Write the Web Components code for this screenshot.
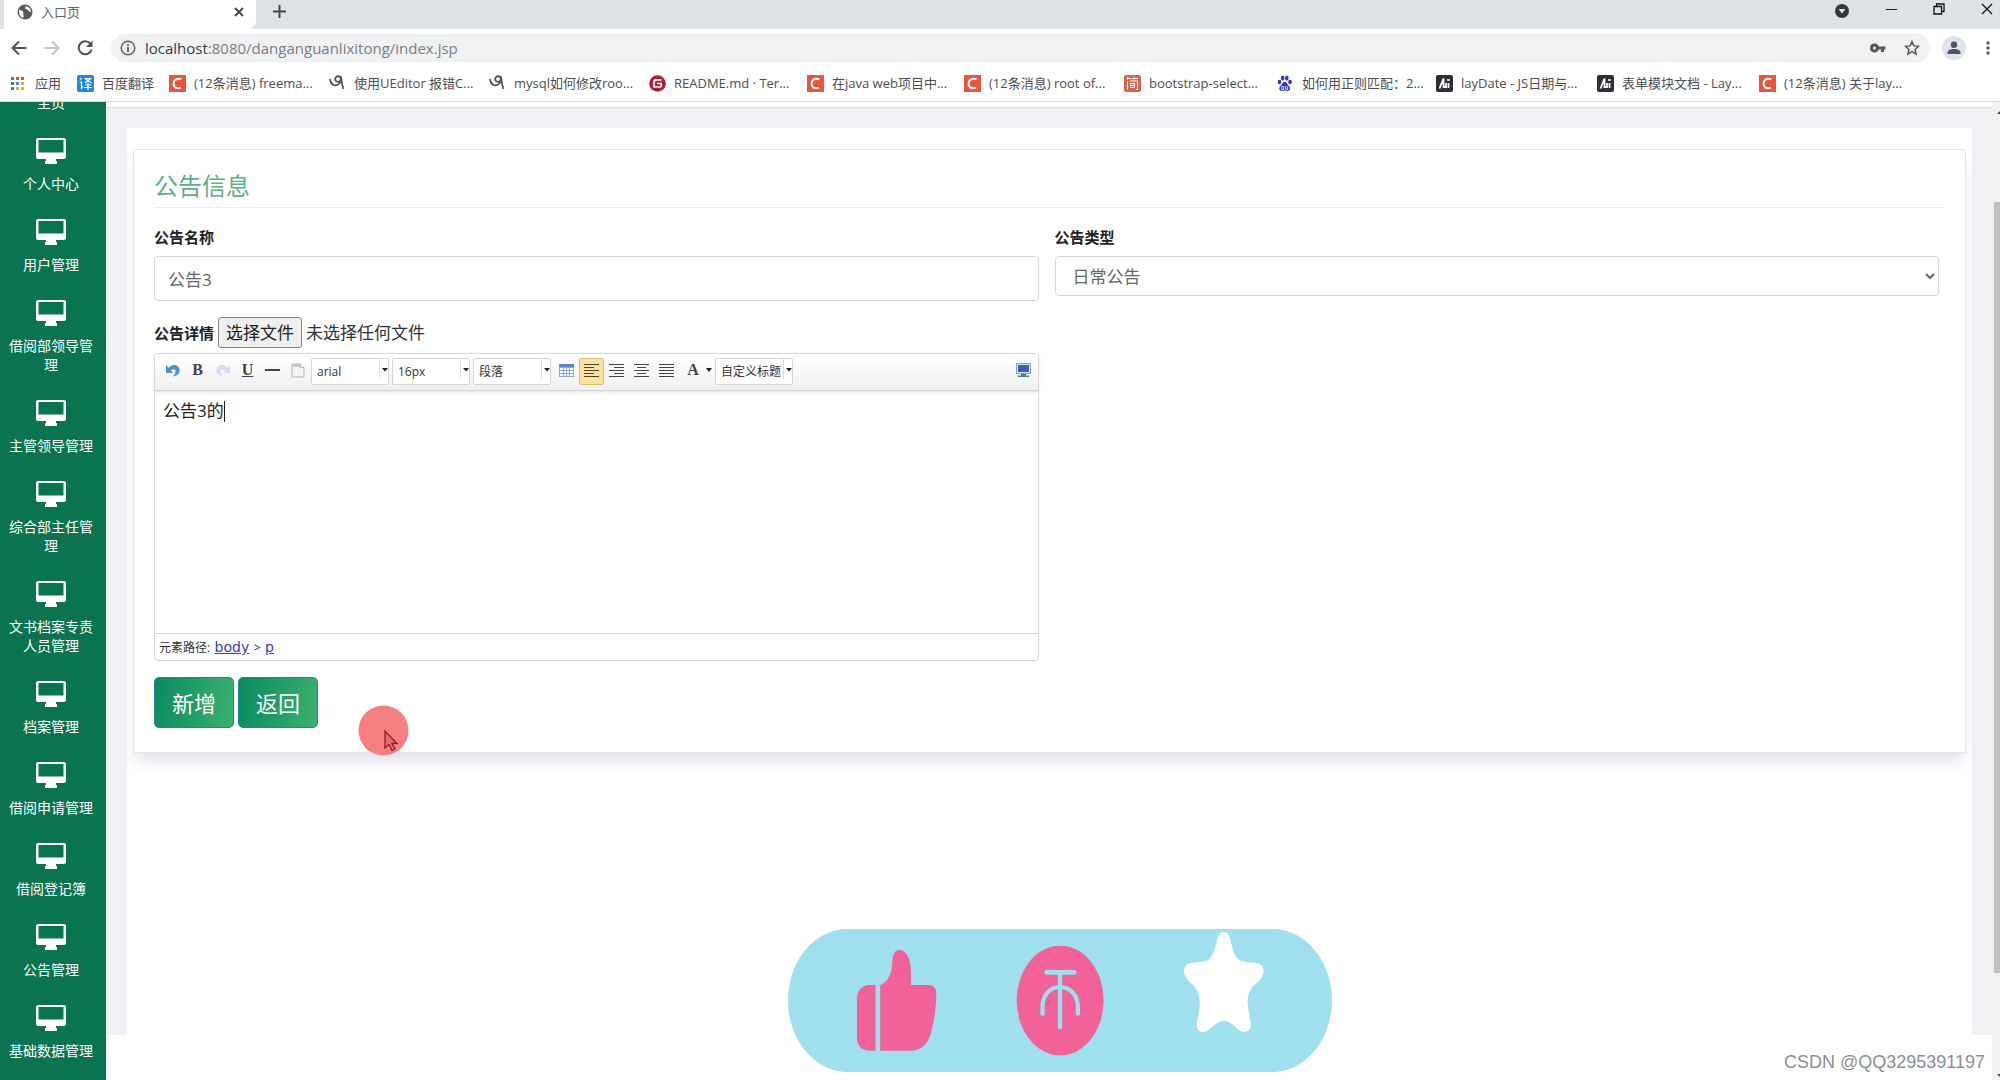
<!DOCTYPE html>
<html lang="zh-CN">
<head>
<meta charset="utf-8">
<title>入口页</title>
<style>
  body { margin: 0; height: 100vh; overflow: hidden; background: #fff; font-family: "Open Sans", "Noto Sans CJK SC", sans-serif; }
</style>
</head>
<body>
<app-window></app-window>

<script>
const define = (name, html, setup) => {
  const tpl = document.createElement('template');
  tpl.innerHTML = html;
  customElements.define(name, class extends HTMLElement {
    constructor() {
      super();
      this.attachShadow({ mode: 'open' }).append(tpl.content.cloneNode(true));
    }
    connectedCallback() { if (setup) setup(this, this.shadowRoot); }
  });
};

/* ---------- browser chrome ---------- */
define('tab-strip', `
<style>
  :host { display: flex; align-items: stretch; height: 29px; background: #dee1e6; padding-left: 4px; }
  .tab { display: flex; align-items: center; width: 252px; box-sizing: border-box; padding: 0 12px 5px 13px; background: #fff; border-radius: 0 0 8px 0; }
  .tab span { flex: 1; margin-left: 8px; font-size: 13px; line-height: 16px; color: #5f6368; }
  button { border: 0; padding: 0; background: none; display: flex; align-items: center; justify-content: center; }
  .plus { width: 46px; padding-bottom: 6px; }
  .win { margin-left: auto; display: flex; padding: 0 7px 11px 0; gap: 36px; align-items: center; }
  .win svg { display: block; }
</style>
<div class="tab">
  <svg width="16" height="16" viewBox="0 0 16 16"><circle cx="8" cy="8" r="7.5" fill="#55585d"/><path d="M2 5.5C3.500 6.500 5 6.200 6 7.500 7 9 5.500 9.500 6.500 11.500 7 13 6 14 6 14 3 13 1.500 10 2 5.500ZM8 2.200C9 3.500 7.500 4 8.500 5 9.500 6 10.500 5 11.500 6.500 12 8 13.500 7.500 14 8.500 14 5 12 2 8 2.200Z" fill="#fff"/></svg>
  <span>入口页</span>
  <button aria-label="关闭标签页"><svg width="10" height="10" viewBox="0 0 10 10" stroke="#45484c" stroke-width="2"><path d="M1 1l8 8M9 1l-8 8"/></svg></button>
</div>
<button class="plus" aria-label="新标签页"><svg width="13" height="13" viewBox="0 0 13 13" stroke="#45484c" stroke-width="2"><path d="M6.500 0v13M0 6.500h13"/></svg></button>
<div class="win">
  <button aria-label="更多"><svg width="16" height="18" viewBox="0 0 16 18"><circle cx="8" cy="11" r="7" fill="#35383c"/><path d="M4.500 9h7L8 13.500Z" fill="#dee1e6"/></svg></button>
  <button aria-label="最小化"><svg width="11" height="11" viewBox="0 0 11 11"><path d="M0 5.500h11" stroke="#222" stroke-width="1"/></svg></button>
  <button aria-label="还原"><svg width="12" height="12" viewBox="0 0 12 12" fill="none" stroke="#111" stroke-width="1.300"><path d="M1 3.500h7.500V11H1ZM3.500 3.500V1H11v7.500H8.500"/></svg></button>
  <button aria-label="关闭"><svg width="12" height="12" viewBox="0 0 12 12" stroke="#111" stroke-width="1.200"><path d="M1 1l10 10M11 1L1 11"/></svg></button>
</div>`);

define('address-bar', `
<style>
  :host { display: flex; align-items: center; height: 38px; padding: 0 10px 0 11px; }
  button { border: 0; padding: 0; background: none; display: flex; }
  .nav { display: flex; gap: 17px; margin-right: 18px; }
  .pill { flex: 1; display: flex; align-items: center; height: 28px; border-radius: 14px; background: #f0f1f3; padding: 0 10px 0 9px; margin-right: 12px; }
  label { display: flex; margin-right: 9px; }
  .url { flex: 1; font-size: 15px; line-height: 20px; color: #7a7e83; white-space: nowrap; }
  .url b { font-weight: 400; color: #3a3d41; }
  .tools { display: flex; gap: 18px; align-items: center; }
  .me { width: 24px; height: 24px; border-radius: 50%; background: #dfe2ea; align-items: center; justify-content: center; margin-right: 20px; }
</style>
<div class="nav">
  <button aria-label="后退"><svg width="16" height="16" viewBox="0 0 16 16" fill="none" stroke="#505459" stroke-width="2"><path d="M15.500 8H2M8 1.500L1.500 8 8 14.500"/></svg></button>
  <button aria-label="前进"><svg width="16" height="16" viewBox="0 0 16 16" fill="none" stroke="#c3c5c8" stroke-width="2"><path d="M.5 8H14M8 1.500L14.500 8 8 14.500"/></svg></button>
  <button aria-label="刷新"><svg width="16" height="16" viewBox="0 0 16 16" fill="none" stroke="#505459" stroke-width="2"><path d="M13.800 4.500A6.500 6.500 0 1 0 14.500 9.500"/><path d="M15.500 .5v6.500H9Z" fill="#505459" stroke="none"/></svg></button>
</div>
<div class="pill">
  <label><svg width="16" height="16" viewBox="0 0 16 16" fill="none" stroke="#5f6368" stroke-width="1.500"><circle cx="8" cy="8" r="6.800"/><path d="M8 7v5M8 4v1.800" stroke-width="1.800"/></svg></label>
  <div class="url" role="textbox" aria-label="地址"><b>localhost</b>:8080/danganguanlixitong/index.jsp</div>
  <div class="tools">
    <button aria-label="密码"><svg width="16" height="16" viewBox="0 0 16 16"><path d="M4.500 3.500a4.500 4.500 0 1 0 4.200 6H11v2.500h3V9.500h1.500v-3H8.700A4.500 4.500 0 0 0 4.500 3.500Zm0 3a1.500 1.500 0 1 1 0 3 1.500 1.500 0 0 1 0-3Z" fill="#55585d"/></svg></button>
    <button aria-label="收藏"><svg width="16" height="16" viewBox="0 0 16 16" fill="none" stroke="#55585d" stroke-width="1.500"><path d="M8 1.500l1.900 4.400 4.700.4-3.600 3.200 1.100 4.700L8 11.700l-4.100 2.500L5 9.500 1.400 6.300l4.700-.4Z"/></svg></button>
  </div>
</div>
<button class="me" aria-label="账户"><svg width="14" height="14" viewBox="0 0 14 14" fill="#4d5366"><circle cx="7" cy="3.800" r="3.200"/><path d="M.5 13V11.500C.5 9 4 8 7 8s6.500 1 6.500 3.500V13Z"/></svg></button>
<button aria-label="菜单"><svg width="4" height="14" viewBox="0 0 4 14" fill="#55585d"><circle cx="2" cy="2" r="1.700"/><circle cx="2" cy="7" r="1.700"/><circle cx="2" cy="12" r="1.700"/></svg></button>`);

const bookmarkIcons = {
  apps: '<g><path fill="#d94b3d" d="M1 2h3v3H1zM6 2h3v3H6zM11 2h3v3h-3z"/><path fill="#3c8f52" d="M1 7h3v3H1z"/><path fill="#4a83e0" d="M6 7h3v3H6z"/><path fill="#e2ae2c" d="M11 7h3v3h-3z"/><path fill="#3c8f52" d="M1 12h3v3H1z"/><path fill="#e2ae2c" d="M6 12h3v3H6zM11 12h3v3h-3z"/></g>',
  fanyi: '<rect width="17" height="17" rx="2" fill="#1e88e5"/><g fill="none" stroke="#fff" stroke-width="1.200"><path d="M3 3l1.500 1.500M2.500 7h2v6l1.500-1.500M7.500 3.500h6L8 8M8.500 4l6 4M8 10h6M7 12.500h8M11 8v7"/></g>',
  csdn: '<rect width="17" height="17" fill="#e9553a"/><path d="M12.500 4.200C8 2.500 4.600 5 4.600 8.800 4.600 12.800 8 14 12 12.900" fill="none" stroke="#fff" stroke-width="2"/>',
  ask: '<g fill="none" stroke="#4a4a4a" stroke-width="1.700"><path d="M1 4c.5 3 1.500 5 3.500 6C7 11 10 9.500 11.500 7"/><circle cx="9" cy="4" r="2.800"/><path d="M12 1.500c.5 5 1 8.500 2.500 12.500"/></g>',
  gitee: '<circle cx="8.500" cy="8.500" r="8.300" fill="#b81b34"/><path d="M12.500 4.800H7.500C5.500 4.800 5 5.500 5 7.500V12h5.500c1.300 0 1.700-.6 1.700-1.700V8.500H8" fill="none" stroke="#fff" stroke-width="1.700"/>',
  jian: '<rect width="17" height="17" rx="2" fill="#d9624f"/><g fill="none" stroke="#fff" stroke-width="1.100"><path d="M4 2L3 4.500M3.500 3.500H8M10 2L9 4.500M9.500 3.500H14M3.500 6v8.500M6 6h7.500v8.500H12M6.500 8.500h4v4h-4zM6.500 10.500h4"/></g>',
  baidu: '<g fill="#2f36d0"><ellipse cx="2.500" cy="7" rx="1.800" ry="2.300"/><ellipse cx="5.700" cy="3" rx="1.800" ry="2.500"/><ellipse cx="9.800" cy="3" rx="1.800" ry="2.500"/><ellipse cx="13" cy="7" rx="1.800" ry="2.300"/><path d="M7.700 7C10 7 10 9.500 12 11c2 2 1 5-1.500 5-1.500 0-1.500-.4-2.800-.4s-1.500.4-3 .4C2.300 16 1.500 13 3.300 11 5.300 9.500 5.300 7 7.700 7Z"/></g><path d="M4.700 11.500h2v3h-2zM8.700 11v3.300h2V11" fill="none" stroke="#fff" stroke-width=".8"/>',
  lay: '<rect width="17" height="17" rx="2" fill="#2c2e38"/><path d="M3.500 13.500L7.500 3.500V12H10V8M12.500 8v5" fill="none" stroke="#fff" stroke-width="1.800"/><path d="M11 5h3" stroke="#fff" stroke-width="1.500"/>'
};
define('book-mark', `
<style>
  :host { display: block; }
  a { display: flex; align-items: center; gap: 8px; font-size: 13px; line-height: 18px; color: #4b4e52; text-decoration: none; white-space: nowrap; }
  svg { display: block; flex: none; }
</style>
<a href="#"><svg width="17" height="17" viewBox="0 0 17 17"></svg><slot></slot></a>`,
(el, root) => { root.querySelector('svg').innerHTML = bookmarkIcons[el.getAttribute('icon')]; });

define('bookmark-bar', `
<style>
  :host { display: grid; grid-template-columns: 67px 92px repeat(3, 160px) 158px 157px 160px 153px 159px 161px 162px auto; align-items: center; height: 32px; padding: 0 0 2px 10px; border-bottom: 1px solid #d9dadc; }
</style>
<book-mark icon="apps">应用</book-mark>
<book-mark icon="fanyi">百度翻译</book-mark>
<book-mark icon="csdn">(12条消息) freema...</book-mark>
<book-mark icon="ask">使用UEditor 报错C...</book-mark>
<book-mark icon="ask">mysql如何修改roo...</book-mark>
<book-mark icon="gitee">README.md · Ter...</book-mark>
<book-mark icon="csdn">在java web项目中...</book-mark>
<book-mark icon="csdn">(12条消息) root of...</book-mark>
<book-mark icon="jian">bootstrap-select...</book-mark>
<book-mark icon="baidu">如何用正则匹配：2...</book-mark>
<book-mark icon="lay">layDate - JS日期与...</book-mark>
<book-mark icon="lay">表单模块文档 - Lay...</book-mark>
<book-mark icon="csdn">(12条消息) 关于lay...</book-mark>`);

/* ---------- side navigation ---------- */
define('nav-item', `
<style>
  :host { display: block; }
  a { display: flex; flex-direction: column; align-items: center; gap: 10px; padding: 26px 8px 0; color: #fff; text-decoration: none; font-size: 14px; line-height: 19px; text-align: center; }
  svg { display: block; }
</style>
<a href="#"><svg width="30" height="26" viewBox="0 0 30 26"><path fill="#fff" fill-rule="evenodd" d="M2 0h26a2 2 0 0 1 2 2v17a2 2 0 0 1-2 2h-8v2h1v3H9v-3h1v-2H2a2 2 0 0 1-2-2V2a2 2 0 0 1 2-2Zm.500 2v12.500h25V2Z"/></svg><slot></slot></a>`);

define('side-nav', `
<style>
  :host { display: block; flex: none; width: 106px; overflow: hidden; background: #0a7350; }
  nav { margin-top: -71px; padding-right: 4px; }
</style>
<nav>
  <nav-item>主页</nav-item>
  <nav-item>个人中心</nav-item>
  <nav-item>用户管理</nav-item>
  <nav-item>借阅部领导管理</nav-item>
  <nav-item>主管领导管理</nav-item>
  <nav-item>综合部主任管理</nav-item>
  <nav-item>文书档案专责人员管理</nav-item>
  <nav-item>档案管理</nav-item>
  <nav-item>借阅申请管理</nav-item>
  <nav-item>借阅登记簿</nav-item>
  <nav-item>公告管理</nav-item>
  <nav-item>基础数据管理</nav-item>
</nav>`);

/* ---------- rich text editor ---------- */
define('tool-combo', `
<style>
  :host { display: flex; width: 78px; height: 27px; box-sizing: border-box; border: 1px solid #d5d5d5; border-radius: 2px; background: #fff; margin: 0 3px 0 0; }
  select { appearance: none; flex: 1; min-width: 0; border: 0; background: none; padding: 0 0 1px 5px; font: 12px "Open Sans", "Noto Sans CJK SC", sans-serif; color: #333; text-overflow: clip; outline: 0; }
  svg { display: block; flex: none; width: 8px; height: 20px; border-left: 1px solid #ddd; }
</style>
<select></select><svg viewBox="0 0 8 20"><path d="M2 9h6L5 12.500Z" fill="#222"/></svg>`,
(el, root) => {
  const s = root.querySelector('select');
  s.setAttribute('aria-label', el.getAttribute('label'));
  s.innerHTML = '<option>' + el.getAttribute('value') + '</option>';
});

define('rich-editor', `
<style>
  :host { display: flex; flex-direction: column; border: 1px solid #d4d4d4; border-radius: 4px; background: #fff; }
  .bar { display: flex; align-items: flex-start; height: 37px; box-sizing: border-box; padding: 4px 0 0 5px; border-bottom: 1px solid #d4d4d4; border-radius: 3px 3px 0 0; background: linear-gradient(#fff, #f0f0f0); box-shadow: 0 1px 4px #ddd; }
  button { width: 25px; height: 27px; padding: 0 0 3px; border: 0; background: none; display: flex; align-items: center; justify-content: center; font: bold 16px "Liberation Serif", serif; color: #444; box-sizing: border-box; }
  button.u { text-decoration: underline; }
  button.on { background: #fde29b; border: 1px solid #dcbf74; border-radius: 2px; }
  .combos { display: flex; padding-left: 1px; }
  .drop { width: 36px; gap: 7px; padding-left: 5px; }
  .full { margin-left: auto; margin-right: 2px; }
  .text { height: 242px; box-sizing: border-box; padding: 8px 8px; font-size: 17px; line-height: 24px; color: #222; outline: 0; }
  .text p { margin: 0; display: flex; align-items: center; }
  .text i { width: 1px; height: 21px; background: #222; }
  .path { height: 27px; box-sizing: border-box; border-top: 1px solid #d4d4d4; padding-left: 4px; font: 14px/26px "DejaVu Sans", sans-serif; color: #333; white-space: nowrap; }
  .path span { font-family: "Open Sans", "Noto Sans CJK SC", sans-serif; font-size: 12px; }
  .path a { color: #3b3bc4; }
</style>
<div class="bar" role="toolbar">
  <button aria-label="撤销"><svg width="14" height="14" viewBox="0 0 14 14"><path d="M0 2v8h7L4.800 7.600C7 5.500 9.500 6 9.500 8.500 9.500 11 8 12.500 6.500 13.500 11 13 14 10.500 13.500 7 13 2 7 0 2.800 5Z" fill="#4b8fcb"/></svg></button>
  <button aria-label="加粗">B</button>
  <button aria-label="重做"><svg width="14" height="14" viewBox="0 0 14 14"><path d="M14 2v8H7l2.200-2.400C7 5.500 4.500 6 4.500 8.500 4.500 11 6 12.500 7.500 13.500 3 13 0 10.500.5 7 1 2 7 0 11.200 5Z" fill="#cfdfef"/></svg></button>
  <button class="u" aria-label="下划线">U</button>
  <button aria-label="分隔线"><svg width="15" height="2"><rect width="15" height="2" fill="#444"/></svg></button>
  <button aria-label="新建"><svg width="14" height="15" viewBox="0 0 14 15"><path d="M1 1h8.500L13 4.500V14H1Z" fill="#f3f3f3" stroke="#b5b5b5"/><path d="M1 1h8.500v3H1Z" fill="#c9c9c9"/><path d="M9.500 1v3.500H13" fill="#fff" stroke="#b5b5b5"/></svg></button>
  <div class="combos">
    <tool-combo label="字体" value="arial"></tool-combo>
    <tool-combo label="字号" value="16px"></tool-combo>
    <tool-combo label="段落格式" value="段落"></tool-combo>
  </div>
  <button aria-label="表格"><svg width="15" height="13" viewBox="0 0 15 13"><rect width="15" height="13" fill="#8faad6"/><path d="M0 0h15v3H0z" fill="#5a86c6"/><path d="M1 4h3v2H1zM5 4h2v2H5zM8 4h2v2H8zM11 4h3v2h-3zM1 7h3v2H1zM5 7h2v2H5zM8 7h2v2H8zM11 7h3v2h-3zM1 10h3v2H1zM5 10h2v2H5zM8 10h2v2H8zM11 10h3v2h-3z" fill="#f4f8ff"/></svg></button>
  <button class="on" aria-label="左对齐"><svg width="15" height="13" viewBox="0 0 15 13" stroke="#444"><path d="M0 .5h15M0 3.500h10M0 6.500h15M0 9.500h10M0 12.500h15"/></svg></button>
  <button aria-label="右对齐"><svg width="15" height="13" viewBox="0 0 15 13" stroke="#444"><path d="M0 .5h15M5 3.500h10M0 6.500h15M5 9.500h10M0 12.500h15"/></svg></button>
  <button aria-label="居中"><svg width="15" height="13" viewBox="0 0 15 13" stroke="#444"><path d="M0 .5h15M3 3.500h9M0 6.500h15M3 9.500h9M0 12.500h15"/></svg></button>
  <button aria-label="两端对齐"><svg width="15" height="13" viewBox="0 0 15 13" stroke="#444"><path d="M0 .5h15M0 3.500h15M0 6.500h15M0 9.500h15M0 12.500h15"/></svg></button>
  <button class="drop" aria-label="字体颜色">A<svg width="6" height="4" viewBox="0 0 6 4"><path d="M0 0h6L3 4Z" fill="#222"/></svg></button>
  <tool-combo label="自定义标题" value="自定义标题"></tool-combo>
  <button class="full" aria-label="全屏"><svg width="15" height="14" viewBox="0 0 15 14"><rect x=".5" y=".5" width="14" height="10" fill="#dbe4f5" stroke="#8ea0c4"/><path d="M2 2h11v7H2z" fill="#3a5fb8"/><path d="M5 11h5v1.500H5zM2 12.500h11V14H2z" fill="#5b6f9c"/></svg></button>
</div>
<div class="text" contenteditable="true" role="textbox" aria-label="公告详情"><p>公告3的<i></i></p></div>
<div class="path"><span>元素路径:</span> <a href="#">body</a> <span>&gt;</span> <a href="#">p</a></div>`);

/* ---------- notice form ---------- */
define('notice-form', `
<style>
  :host { display: block; border: 1px solid #e4e5e8; background: #fff; padding: 19px 21px 21px 20px; border-radius: 3px 3px 0 0; box-shadow: 0 10px 16px -2px #dfe3ea; }
  h4 { margin: 0; padding-bottom: 4px; border-bottom: 1px solid #ececec; font-size: 24px; line-height: 34px; font-weight: 400; color: #5fb085; }
  form { display: grid; grid-template-columns: 1fr 1fr; gap: 15px 16px; padding: 18px 5px 0 0; align-items: start; }
  .field { display: flex; flex-direction: column; }
  label { font-size: 15px; line-height: 22px; font-weight: 700; color: #222; margin-bottom: 8px; }
  input.box, select.box { box-sizing: border-box; width: 100%; border: 1px solid #d5d7da; border-radius: 4px; background: #fff; color: #666; font: 17px "Open Sans", "Noto Sans CJK SC", sans-serif; outline: 0; }
  input.box { height: 45px; padding: 0 13px; }
  select.box { height: 40px; padding: 1px 13px 0; }
  .file { display: flex; align-items: center; gap: 4px; height: 33px; margin-bottom: 4px; font-size: 17px; color: #333; }
  .file label { margin: 0; }
  .file input { display: none; }
  .file button { height: 31px; width: 84px; padding: 0; border: 1px solid #858585; border-radius: 3px; background: #efefef; font: 17px/24px "Open Sans", "Noto Sans CJK SC", sans-serif; color: #222; }
  .file span { line-height: 24px; }
  .actions { grid-column: 1 / -1; display: flex; gap: 4px; padding: 1px 0 3px; }
  .actions button { width: 80px; height: 51px; padding: 0 0 2px; border: 1px solid #1987a0; border-radius: 5px; background: linear-gradient(100deg, #0a8a60, #3bb16e); color: #fff; font: 22px "Open Sans", "Noto Sans CJK SC", sans-serif; }
</style>
<h4>公告信息</h4>
<form>
  <div class="field"><label for="name">公告名称</label><input class="box" id="name" value="公告3"></div>
  <div class="field"><label for="type">公告类型</label><select class="box" id="type"><option>日常公告</option></select></div>
  <div class="field">
    <div class="file"><label for="file">公告详情</label><button type="button">选择文件</button><span>未选择任何文件</span><input type="file" id="file"></div>
    <rich-editor></rich-editor>
  </div>
  <div class="actions"><button type="button">新增</button><button type="button">返回</button></div>
</form>`,
(el, root) => {
  root.querySelector('.file button').onclick = () => root.querySelector('#file').click();
});

/* ---------- overlays ---------- */
define('click-marker', `
<style>:host { display: block; position: absolute; left: 358px; top: 705px; } svg { display: block; }</style>
<svg width="51" height="51" viewBox="0 0 51 51"><circle cx="25.500" cy="25.500" r="25" fill="#f67f80"/><path d="M27 26v17l4-3.500 3 6 3-1.500-3-5.500h5Z" fill="#e96a6c" stroke="#8c1c22" stroke-width="1.300"/></svg>`);

define('like-banner', `
<style>:host { display: block; position: absolute; left: 788px; top: 929px; } svg { display: block; }</style>
<svg width="544" height="143" viewBox="24 27 1522 429" preserveAspectRatio="none">
  <path fill="#a0dfed" d="M190 27H1380C1470 27 1546 122 1546 241S1470 456 1380 456H190C100 456 24 361 24 241S100 27 190 27Z"/>
  <g fill="#f16298">
    <path d="M269 195V392H250C230 392 217 375 217 355V235C217 212 232 195 252 195Z"/>
    <path d="M282 195C303 186 314 163 316 128C316 104 322 89 336 89C355 89 368 120 368 150V195H415C431 195 439 204 439 222C438 270 431 310 424 340C414 375 395 392 370 392H282Z"/>
    <ellipse cx="785.500" cy="241.500" rx="121.500" ry="164.500"/>
  </g>
  <g fill="none" stroke="#a0dfed" stroke-width="12" stroke-linecap="round">
    <path d="M748 157H824" stroke-width="14"/><path d="M785 160V322"/><path d="M736 281V262C736 225 757 201 785 201S835 225 835 262V281"/>
  </g>
  <path fill="#fff" d="M1243 36C1254 36 1259 46 1262 60C1267 85 1274 112 1288 121C1300 127 1316 128 1330 128C1346 129 1355 140 1355 154C1353 172 1342 184 1332 192C1319 204 1310 222 1310 245C1311 270 1318 295 1319 316C1319 330 1310 336 1300 336C1280 333 1266 302 1243 302C1221 302 1207 333 1186 336C1174 336 1168 328 1168 314C1169 295 1176 270 1176 245C1176 222 1167 205 1154 192C1143 183 1133 171 1132 154C1131 139 1142 128 1158 128C1172 127 1187 126 1198 121C1212 112 1219 85 1225 60C1228 46 1233 36 1243 36Z"/>
</svg>`);

define('page-scrollbar', `
<style>
  :host { display: flex; flex-direction: column; flex: none; width: 8px; background: #f1f1f1; align-items: flex-end; }
  svg { display: block; }
  .gap { flex: 87; } .thumb { flex: 772; width: 6px; background: #c1c1c1; } .rest { flex: 94; }
</style>
<svg width="3" height="13" viewBox="0 0 3 13"><path d="M0 12L3 9v3Z" fill="#444"/></svg>
<div class="gap"></div><div class="thumb"></div><div class="rest"></div>
<svg width="3" height="13" viewBox="0 0 3 13"><path d="M0 7h3v3Z" fill="#444"/></svg>`);

/* ---------- window ---------- */
define('app-window', `
<style>
  :host { display: flex; flex-direction: column; height: 100vh; position: relative; }
  .row { flex: 1; min-height: 0; display: flex; }
  main { flex: 1; min-width: 0; display: flex; flex-direction: column; padding-bottom: 45px; }
  .top { height: 5px; flex: none; border-bottom: 1px solid #dadbdd; }
  .stage { flex: 1; display: flex; padding: 20px 20px 0 21px; background: #f0f1f5; }
  .panel { flex: 1; background: #fff; padding: 21px 6px 0 6px; }
  .mark { position: absolute; right: 15px; bottom: 7px; font: 18px/22px "Liberation Sans", sans-serif; color: #8d8f92; }
</style>
<tab-strip></tab-strip>
<address-bar></address-bar>
<bookmark-bar></bookmark-bar>
<div class="row">
  <side-nav></side-nav>
  <main><div class="top"></div><div class="stage"><div class="panel"><notice-form></notice-form></div></div></main>
  <page-scrollbar></page-scrollbar>
</div>
<click-marker></click-marker>
<like-banner></like-banner>
<div class="mark">CSDN @QQ3295391197</div>`);
</script>
</body>
</html>
